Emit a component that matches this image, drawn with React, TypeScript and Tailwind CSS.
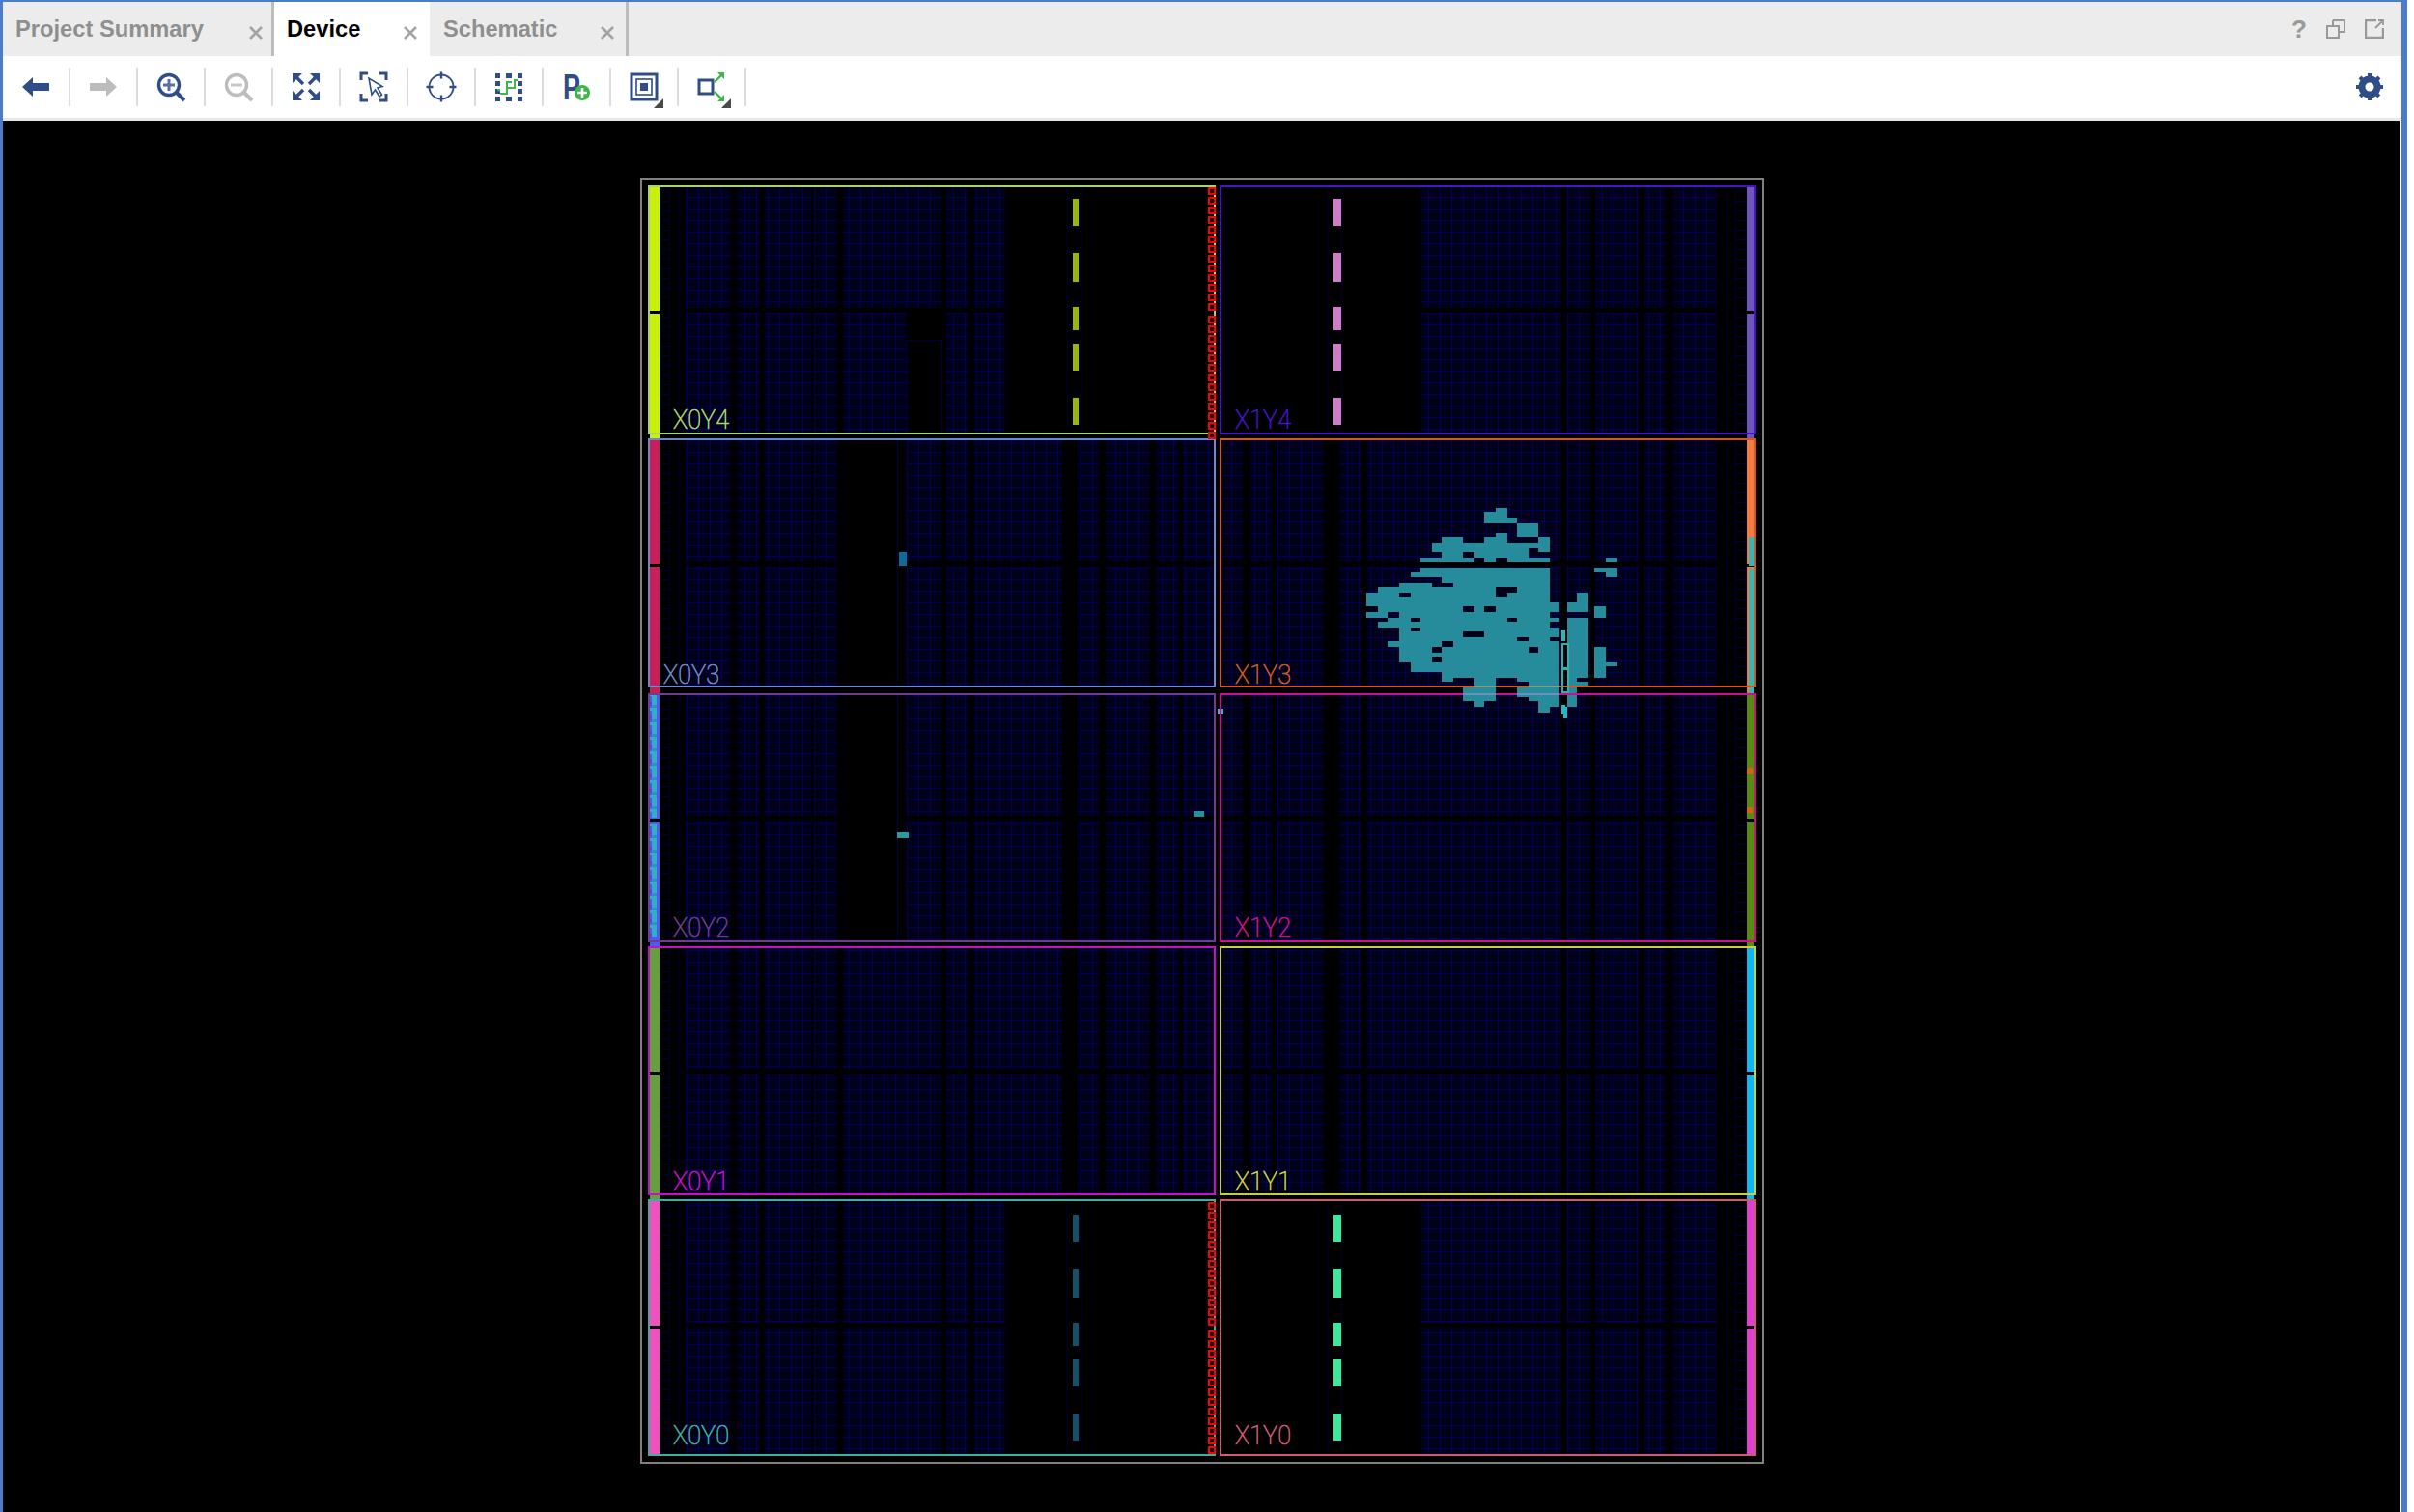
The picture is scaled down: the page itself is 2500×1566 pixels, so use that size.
import type { ReactNode } from 'react';

const NAVY = '#2f4d86';
const GRAY = '#bcbcbc';
const GREEN = '#3fb54a';

// columns of the fabric, x ranges
const X0_COLS = [[711, 757], [763, 787], [792, 840], [843, 867], [873, 975], [980, 1003], [1009, 1100], [1116, 1138], [1145, 1191], [1197, 1221], [1225, 1257]];
const X1_COLS = [[1266, 1287], [1295, 1317], [1322, 1371], [1387, 1411], [1416, 1617], [1623, 1647], [1652, 1697], [1703, 1725], [1733, 1778]];

const ROWS = [
  { name: 'Y4', top: 192, edge: 193, bottom: 449, barEnd: 454, labelGap: 5 },
  { name: 'Y3', top: 454, edge: 455, bottom: 711, barEnd: 718, labelGap: 3 },
  { name: 'Y2', top: 718, edge: 719, bottom: 975, barEnd: 980, labelGap: 5 },
  { name: 'Y1', top: 980, edge: 981, bottom: 1237, barEnd: 1243, labelGap: 4 },
  { name: 'Y0', top: 1243, edge: 1243, bottom: 1507, barEnd: 1507, labelGap: 11 },
];

const REGIONS = [
  { label: 'X0Y4', row: 0, x: 0, color: '#a8d46f', bar: '#c8f00a', labelX: 697, dash: '#9ab50c' },
  { label: 'X1Y4', row: 0, x: 1, color: '#4514c8', bar: '#6e55c0', labelX: 1279, dash: '#d07cc8' },
  { label: 'X0Y3', row: 1, x: 0, color: '#6e88cc', bar: '#c81e5a', labelX: 687 },
  { label: 'X1Y3', row: 1, x: 1, color: '#d05a1e', bar: '#f47a40', labelX: 1279 },
  { label: 'X0Y2', row: 2, x: 0, color: '#703c90', bar: '#4a5cf5', labelX: 697 },
  { label: 'X1Y2', row: 2, x: 1, color: '#d00e90', bar: '#5a8a10', labelX: 1279 },
  { label: 'X0Y1', row: 3, x: 0, color: '#c80ec8', bar: '#64a040', labelX: 697 },
  { label: 'X1Y1', row: 3, x: 1, color: '#c8d040', bar: '#10b8f0', labelX: 1279 },
  { label: 'X0Y0', row: 4, x: 0, color: '#3cb0a0', bar: '#f050c0', labelX: 697, dash: '#14506c' },
  { label: 'X1Y0', row: 4, x: 1, color: '#d05a70', bar: '#e040d0', labelX: 1279, dash: '#3de89a' },
];

const DASHES = [[14, 42], [70, 100], [126, 150], [164, 192], [220, 248]];

// placed cells, in 3x coordinates of the cluster crop
const CLUSTER = [
  [471, 90, 543, 126], [507, 78, 543, 90], [543, 108, 573, 126], [573, 126, 639, 168], [507, 156, 543, 168], [471, 168, 543, 186],
  [339, 168, 405, 186], [639, 168, 675, 186], [309, 186, 675, 216], [339, 216, 405, 234], [441, 216, 609, 234], [639, 204, 675, 216],
  [273, 234, 441, 246], [471, 234, 507, 246], [543, 234, 675, 246], [273, 264, 675, 276], [243, 276, 675, 294], [339, 294, 675, 312],
  [207, 312, 309, 324], [375, 312, 675, 324], [141, 324, 675, 342], [105, 342, 675, 372], [105, 372, 705, 384], [141, 384, 705, 402],
  [105, 402, 171, 420], [207, 402, 675, 420], [171, 420, 705, 432], [141, 432, 675, 450], [207, 450, 705, 492], [171, 492, 705, 510],
  [207, 510, 705, 558], [243, 558, 705, 588], [339, 588, 705, 606], [339, 606, 375, 618], [441, 606, 507, 636], [573, 606, 705, 618],
  [609, 618, 705, 660], [405, 636, 507, 678], [441, 678, 471, 696], [573, 636, 609, 666], [609, 660, 705, 678], [639, 678, 705, 696],
  [639, 696, 675, 714], [759, 342, 795, 372], [729, 372, 795, 402], [729, 420, 795, 606], [729, 606, 759, 696], [729, 618, 795, 636],
  [813, 384, 849, 420], [813, 510, 849, 606], [849, 558, 885, 570], [849, 234, 885, 246], [813, 264, 885, 276], [849, 276, 885, 294],
];

const CLUSTER_HOLES = [
  [609, 204, 639, 216], [405, 216, 441, 234], [207, 342, 243, 354], [507, 324, 573, 342], [507, 342, 543, 354], [105, 384, 141, 402],
  [405, 384, 441, 402], [471, 384, 507, 402], [243, 420, 273, 432], [543, 420, 573, 432], [243, 450, 273, 462], [405, 462, 471, 480],
  [573, 480, 609, 492], [675, 480, 705, 492], [339, 492, 375, 510], [309, 510, 339, 528], [609, 510, 639, 528], [309, 540, 339, 558],
];

const Fabric = () => {
  const cells: ReactNode[] = [];
  ROWS.forEach((row, r) => {
    const sparse = r === 0 || r === 4;
    const h = row.bottom - row.top;
    // x0 columns
    X0_COLS.forEach(([a, b]) => {
      let from = a;
      let to = b;
      if (sparse && a >= 1041) return;
      if (sparse && b > 1041) to = 1041;
      if ((r === 1 || r === 2) && a === 873) from = 939;
      if (r === 0 && a === 873) {
        cells.push(<rect key={`a${r}${a}l`} x={873} y={row.top + 132} width={66} height={h - 132} fill="url(#fabric)" />);
        cells.push(<rect key={`a${r}${a}o`} x={939} y={352} width={36} height={h - 160} fill="none" stroke="#00003c" />);
        cells.push(<rect key={`a${r}${a}u`} x={873} y={row.top} width={102} height={128} fill="url(#fabric)" />);
        return;
      }
      cells.push(<rect key={`a${r}${a}`} x={from} y={row.top} width={to - from} height={h} fill="url(#fabric)" />);
    });
    // x1 columns
    X1_COLS.forEach(([a, b]) => {
      if (sparse && b <= 1471) return;
      const from = sparse && a < 1471 ? 1471 : a;
      cells.push(<rect key={`b${r}${a}`} x={from} y={row.top} width={b - from} height={h} fill="url(#fabric)" />);
    });
    // the horizontal clock band
    cells.push(<rect key={`band${r}`} x={672} y={row.top + 127} width={1146} height={5} fill="#000" />);
    // black block of x0y3 and x0y2
    if (r === 1 || r === 2) {
      cells.push(<line key={`bl${r}`} x1={929} x2={929} y1={row.top} y2={row.bottom} stroke="#00003c" />);
    }
    // io ladders
    [693, 702, 710, 1789, 1797].forEach((lx) => {
      cells.push(<line key={`v${r}${lx}`} x1={lx} x2={lx} y1={row.top + 4} y2={row.bottom} stroke="#00002e" />);
    });
    for (let y = row.top + 6; y < row.bottom; y += 10) {
      if (y > row.top + 124 && y < row.top + 134) continue;
      cells.push(<line key={`r${r}${y}`} x1={685} x2={693} y1={y} y2={y} stroke="#00003a" />);
      cells.push(<line key={`s${r}${y}`} x1={1797} x2={1808} y1={y} y2={y} stroke="#00003a" />);
    }
    if (sparse) {
      [1105, 1120, 1375, 1389].forEach((lx) => {
        cells.push(<line key={`d${r}${lx}`} x1={lx} x2={lx} y1={row.top + 4} y2={row.bottom} stroke="#00002e" />);
      });
    }
  });
  return <g>{cells}</g>;
};

const SpineChain = ({ top }: { top: number }) => (
  <g>
    {Array.from({ length: 26 }).map((_, i) => {
      const y = top + 3 + i * 10 + (i > 12 ? 3 : 0);
      return <rect key={i} x={1252} y={y} width={6} height={6} fill="#000" stroke="#ff0000" strokeWidth={2} />;
    })}
  </g>
);

const Bars = () => (
  <g>
    {REGIONS.map((rg) => {
      const row = ROWS[rg.row];
      const x = rg.x === 0 ? 673 : 1809;
      const w = rg.x === 0 ? 10 : 8;
      return (
        <g key={rg.label}>
          <rect x={x} y={row.top} width={w} height={row.barEnd - row.top} fill={rg.bar} />
          <rect x={x - 1} y={row.top + 130} width={w + 1} height={3} fill="#000" />
        </g>
      );
    })}
    {/* placed cells on the left and right io columns */}
    <rect x={1811} y={556} width={6} height={30} fill="#3cb4b4" />
    <rect x={1811} y={589} width={6} height={129} fill="#3cb4b4" />
    <rect x={1809} y={795} width={6} height={7} fill="#d8640a" />
    <rect x={1809} y={836} width={6} height={6} fill="#d8640a" />
    {Array.from({ length: 84 }).map((_, i) => {
      const y = 718 + i * 3;
      if (y > 846 && y < 852) return null;
      const odd = (i * 7) % 5;
      return (
        <g key={i}>
          <rect x={odd === 0 ? 673 : 675} y={y} width={odd === 0 ? 7 : 5} height={3} fill={odd === 3 ? '#2f8ed0' : '#30b0c4'} />
          {odd === 1 && <rect x={673} y={y} width={2} height={3} fill="#7a30e0" />}
        </g>
      );
    })}
  </g>
);

const Device = () => (
  <svg width={1164} height={1332} viewBox="663 184 1164 1332" shapeRendering="crispEdges" className="block">
    <defs>
      <pattern id="fabric" x={711} y={192} width={12} height={12} patternUnits="userSpaceOnUse">
        <rect width={12} height={12} fill="#000018" />
        <rect x={0} width={1} height={12} fill="#00005c" />
        <rect y={0} width={12} height={1} fill="#00005c" />
      </pattern>
    </defs>
    <rect x={664} y={185} width={1162} height={1330} fill="none" stroke="#808080" strokeWidth={2} />
    <Fabric />

    {/* placement */}
    <g transform="translate(1380 500) scale(0.33333)" fill="#268c9c">
      {CLUSTER.map(([a, b, c, d], i) => (
        <rect key={i} x={a} y={b} width={c - a} height={d - b} />
      ))}
      {CLUSTER_HOLES.map(([a, b, c, d], i) => (
        <rect key={i} x={a} y={b} width={c - a} height={d - b} fill="#000018" />
      ))}
    </g>
    <rect x={931} y={572} width={8} height={14} fill="#0d6c94" />
    <rect x={929} y={862} width={12} height={6} fill="#2a9a9e" />
    <rect x={1237} y={840} width={10} height={6} fill="#26919c" />
    <rect x={1261} y={734} width={6} height={6} fill="#30b8c4" />

    <Bars />

    {/* dashes of the two blank columns */}
    {REGIONS.filter((rg) => rg.dash).map((rg) =>
      DASHES.map(([a, b]) => (
        <rect
          key={rg.label + a}
          x={rg.x === 0 ? 1111 : 1381}
          y={ROWS[rg.row].top + a + (rg.row === 4 ? 1 : 0)}
          width={rg.x === 0 ? 6 : 8}
          height={b - a}
          fill={rg.dash}
        />
      )),
    )}

    {/* region outlines and names */}
    {REGIONS.map((rg) => {
      const row = ROWS[rg.row];
      const left = rg.x === 0 ? 672 : 1264;
      const right = rg.x === 0 ? 1258 : 1818;
      return (
        <g key={rg.label}>
          <rect x={left} y={row.edge} width={right - left} height={row.bottom - row.edge} fill="none" stroke={rg.color} strokeWidth={2} />
          <text
            x={rg.labelX}
            y={row.bottom - row.labelGap}
            fill={rg.color}
            stroke={rg.color}
            strokeWidth={0.7}
            textLength={58}
            lengthAdjust="spacingAndGlyphs"
            className="font-['Roboto',sans-serif] text-[28px] font-thin"
          >
            {rg.label}
          </text>
        </g>
      );
    })}

    <SpineChain top={192} />
    <SpineChain top={1243} />

    {/* cells sitting over the x1y3 outline */}
    <rect x={1527} y={710} width={22} height={2} fill="#78a090" />
    <rect x={1583} y={710} width={32} height={2} fill="#78a090" />
    <rect x={1515} y={718} width={34} height={2} fill="#6c90b8" />
    <rect x={1571} y={718} width={44} height={2} fill="#6c90b8" />
    <g fill="#2ab8b8">
      <rect x={1617} y={652} width={4} height={12} />
      <rect x={1617} y={730} width={4} height={10} />
      <rect x={1619} y={732} width={4} height={12} />
    </g>
    <g fill="none" stroke="#2cb4b4" strokeWidth={2}>
      <rect x={1618} y={667} width={6} height={25} />
      <rect x={1618} y={693} width={6} height={24} />
    </g>
  </svg>
);

const Close = () => (
  <svg width={14} height={14} viewBox="0 0 14 14" className="shrink-0 mt-[7px]">
    <path d="M1 1l12 12M13 1L1 13" stroke="#a3a3a3" strokeWidth={2.6} fill="none" />
  </svg>
);

const Tab = ({ label, active, className }: { label: string; active?: boolean; className: string }) => (
  <div className={`flex items-center justify-between h-full ${active ? 'bg-white text-black' : 'text-[#8f8f8f]'} ${className}`}>
    <span className="font-bold text-[23.7px] leading-none pt-[1px]">{label}</span>
    <Close />
  </div>
);

const Icon = ({ children }: { children: ReactNode }) => (
  <svg width={36} height={36} viewBox="0 0 36 36" overflow="visible">
    {children}
  </svg>
);

const ArrowLeft = () => (
  <Icon>
    <path d="M4 18L15 8v6h17v8H15v6z" fill={NAVY} />
  </Icon>
);

const ArrowRight = () => (
  <Icon>
    <path d="M32 18L21 8v6H4v8h17v6z" fill={GRAY} />
  </Icon>
);

const Zoom = ({ color, plus }: { color: string; plus?: boolean }) => (
  <Icon>
    <circle cx={16} cy={16} r={10.5} fill="#fff" stroke={color} strokeWidth={3.4} />
    <path d="M24 24l8 8" stroke={color} strokeWidth={4} />
    <path d={plus ? 'M10 16h12M16 10v12' : 'M10 16h12'} stroke={color} strokeWidth={3} opacity={0.8} />
  </Icon>
);

const FitIcon = () => (
  <Icon>
    <g fill={NAVY}>
      <path d="M4 4h10L4 14z" />
      <path d="M32 4H22l10 10z" />
      <path d="M4 32h10L4 22z" />
      <path d="M32 32H22l10-10z" />
    </g>
    <path d="M7 7l8 8M29 7l-8 8M7 29l8-8M29 29l-8-8" stroke={NAVY} strokeWidth={3.4} />
  </Icon>
);

const SelectIcon = () => (
  <Icon>
    <path d="M5 11V4h7M24 4h7v7M31 25v7h-7M12 32H5v-7" stroke={NAVY} strokeWidth={3} fill="none" />
    <path d="M13 9l3 17 3.5-5 4.500 7 2.500-2-4.500-7 5-1.500z" fill="#fff" stroke={NAVY} strokeWidth={1.6} />
  </Icon>
);

const TargetIcon = () => (
  <Icon>
    <circle cx={18} cy={18} r={12.500} stroke={NAVY} strokeWidth={1.800} fill="none" />
    <path d="M18 2.500v7M18 26.500v7M2.500 18h7M26.500 18h7" stroke={NAVY} strokeWidth={2.400} />
  </Icon>
);

const RouteIcon = () => (
  <Icon>
    <g fill={NAVY}>
      {[4, 12, 20, 28].map((y) => (
        <g key={y}>
          <rect x={4} y={y} width={5} height={5} />
          <rect x={27} y={y} width={5} height={5} />
        </g>
      ))}
      <rect x={15} y={4} width={6} height={5} />
      <rect x={15} y={28} width={6} height={5} />
    </g>
    <path d="M9 25h7V13h5M6 21h3M16 19h8v-8h3" stroke={GREEN} strokeWidth={2} fill="none" />
  </Icon>
);

const PblockIcon = () => (
  <Icon>
    <text x={4} y={31} fill={NAVY} textLength={18} lengthAdjust="spacingAndGlyphs" className="font-['Liberation_Sans',sans-serif] font-bold text-[37px]">P</text>
    <circle cx={24} cy={24} r={8} fill={GREEN} />
    <path d="M24 19v10M19 24h10" stroke="#fff" strokeWidth={2.600} />
  </Icon>
);

const Corner = () => (
  <svg width={10} height={10} viewBox="0 0 10 10" className="absolute right-[14px] bottom-[-2px]">
    <path d="M10 0v10H0z" fill="#4a4a4a" />
  </svg>
);

const NestedIcon = () => (
  <Icon>
    <rect x={5} y={5} width={26} height={26} fill="none" stroke={NAVY} strokeWidth={3} />
    <rect x={10} y={10} width={16} height={16} fill="none" stroke={NAVY} strokeWidth={1.600} />
    <rect x={14} y={14} width={8} height={8} fill={NAVY} />
  </Icon>
);

const SpreadIcon = () => (
  <Icon>
    <rect x={5} y={11} width={14} height={14} fill="none" stroke={NAVY} strokeWidth={3} />
    <path d="M21 13l9-9M21 23l9 9" stroke={GREEN} strokeWidth={2.400} />
    <path d="M24 3h7v7zM24 33h7v-7z" fill={GREEN} />
  </Icon>
);

const Gear = () => (
  <svg width={30} height={30} viewBox="0 0 30 30">
    <circle cx={15} cy={15} r={8} fill="none" stroke={NAVY} strokeWidth={7} />
    <path d="M15 1v28M1 15h28M5 5l20 20M25 5L5 25" stroke={NAVY} strokeWidth={4} strokeDasharray="5 18 5" />
  </svg>
);

const TOOLS: ReactNode[] = [
  <ArrowLeft />,
  <ArrowRight />,
  <Zoom color={NAVY} plus />,
  <Zoom color={GRAY} />,
  <FitIcon />,
  <SelectIcon />,
  <TargetIcon />,
  <RouteIcon />,
  <PblockIcon />,
  <><NestedIcon /><Corner /></>,
  <><SpreadIcon /><Corner /></>,
];

export default function App() {
  return (
    <div className="w-[2500px] h-[1566px] bg-white overflow-hidden font-['Liberation_Sans',sans-serif]">
      <div className="w-[2493px] h-full flex flex-col border-t-2 border-l-[3px] border-r-[6px] border-[#4a7ccc]">
        <div className="h-[56px] bg-[#ececec] flex items-stretch shrink-0">
          <div className="flex h-full">
            <Tab label="Project Summary" className="w-[281px] pl-[13px] pr-[9px] border-r-[3px] border-[#bdbdbd]" />
            <Tab label="Device" active className="w-[161px] pl-[13px] pr-[13px]" />
            <Tab label="Schematic" className="w-[206px] pl-[14px] pr-[12px] border-r-[3px] border-[#bdbdbd]" />
          </div>
          <div className="ml-auto flex items-center gap-[20px] pr-[18px] text-[#999999]">
            <span className="font-bold text-[26px] leading-none">?</span>
            <svg width={20} height={20} viewBox="0 0 20 20">
              <path d="M7 1h12v12h-5M1 7h12v12H1z" fill="none" stroke="#999999" strokeWidth={2} />
              <path d="M7 7V1" stroke="#999999" strokeWidth={2} />
            </svg>
            <svg width={20} height={20} viewBox="0 0 20 20">
              <path d="M12 1H1v18h18V9" fill="none" stroke="#999999" strokeWidth={2.400} />
              <path d="M11 9l7-7M14 1h5v5" fill="none" stroke="#999999" strokeWidth={1.800} />
            </svg>
          </div>
        </div>

        <div className="h-[64px] bg-white flex items-center shrink-0 pr-[18px]">
          {TOOLS.map((tool, i) => (
            <div key={i} className="relative w-[70px] h-[40px] flex items-center justify-center border-r-2 border-[#dcdcdc]">
              {tool}
            </div>
          ))}
          <div className="ml-auto flex">
            <Gear />
          </div>
        </div>
        <div className="h-[3px] bg-[#e8e8e8] shrink-0" />

        <div className="flex-1 mr-[2px] pl-[2px] bg-black flex justify-center pt-[59px] min-h-0">
          <Device />
        </div>
      </div>
    </div>
  );
}
